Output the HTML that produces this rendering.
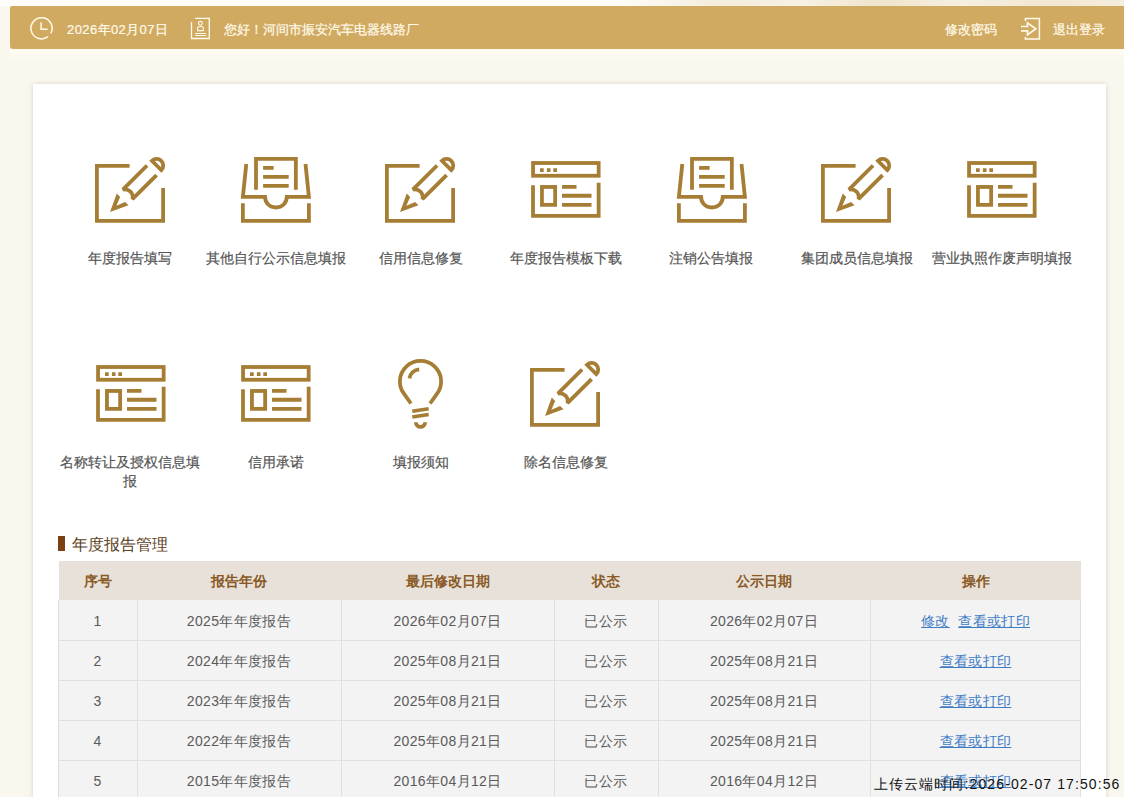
<!DOCTYPE html>
<html><head><meta charset="utf-8">
<style>
*{margin:0;padding:0;box-sizing:border-box}
html,body{width:1124px;height:797px;overflow:hidden}
body{background:#f9f7ee;font-family:"Liberation Sans",sans-serif;position:relative}
.toptex{position:absolute;left:0;top:0;width:1124px;height:6px;background:linear-gradient(90deg,#fdfdfb 0,#fdfcf8 620px,#f4ecdc 720px,#f7f1e4 800px,#efe4cc 880px,#f6efe0 960px,#f1e7d2 1050px,#f5eddd 1124px)}
.bar{position:absolute;left:10px;top:6px;width:1114px;height:43px;background:#d1aa62;border-radius:2px 0 0 3px;color:#fffbea;font-size:13px;-webkit-text-stroke:0.2px #fffbea}
.bar span{position:absolute;top:16px;line-height:16px;white-space:nowrap}
.card{position:absolute;left:33px;top:84px;width:1073px;height:760px;background:#fff;box-shadow:0 0 5px rgba(0,0,0,.14)}
.lbl{position:absolute;width:146px;text-align:center;font-size:14px;line-height:19px;color:#555;-webkit-text-stroke:0.2px #555}
.ttl{position:absolute;left:58px;top:536px;width:7px;height:15px;background:#7b4010}
.ttlt{position:absolute;left:72px;top:535px;font-size:16px;line-height:20px;color:#5b3d21}
.th{position:absolute;top:561px;height:39px;left:59px;width:1022px;background:#e8e1d9}
.cell{position:absolute;text-align:center;font-size:14px;line-height:20px;color:#5a5a5a;letter-spacing:0.35px}
.hd{letter-spacing:0}
.hd{font-weight:bold;color:#8a5a26}
.row{position:absolute;left:58px;width:1023px;height:40px;background:#f3f3f3;border-left:1px solid #dedede;border-right:1px solid #dedede;border-bottom:1px solid #e0e0e0}
.hl{position:absolute;left:58px;width:1023px;height:1px;background:#e0e0e0}
.vl{position:absolute;top:600px;width:1px;height:197px;background:#e0e0e0}
a{color:#3f7cc6;text-decoration:underline}
.stamp{position:absolute;left:874px;top:774px;font-size:14px;line-height:20px;color:#111;white-space:nowrap;letter-spacing:1.1px}
</style></head><body>
<div class="toptex"></div>
<div style="position:absolute;left:10px;top:49px;width:1114px;height:12px;background:linear-gradient(#fffdf3,#f9f7ee)"></div>
<div class="bar">
  <span style="left:57px;letter-spacing:0.4px">2026年02月07日</span>
  <span style="left:214px">您好！河间市振安汽车电器线路厂</span>
  <span style="left:935px">修改密码</span>
  <span style="left:1043px">退出登录</span>
</div>
<svg style="position:absolute;left:0;top:0" width="1124" height="60" viewBox="0 0 1124 60" fill="none" stroke="#fffbea" stroke-width="1.5">
  <path d="M48,36.65 A10.6,10.6 0 1 1 50.86,33.28"/>
  <path d="M41.1,22.3 V29.3 H47.6"/>
  <path d="M195.2,18.4 H209.3 V38.5 H191.5 V22" stroke-width="1.3"/>
  <circle cx="200.4" cy="23.3" r="1.9" stroke-width="1.1"/>
  <path d="M197.6,30.6 V28.3 Q197.6,26.5 200.4,26.5 Q203.3,26.5 203.3,28.3 V30.6 Z" stroke-width="1.1"/>
  <path d="M195.2,33.5 H205.9 M195.2,35.5 H205.9" stroke-width="1"/>
  <path d="M1025.4,20.9 V18.5 H1039.4 V39.1 H1025.4 V37.1" stroke-width="1.5"/>
  <path d="M1021,26.5 H1027.5 V22.8 L1035.8,28.8 L1027.5,34.9 V30.9 H1021" stroke-width="1.7"/>
</svg>
<div class="card"></div>
<svg style="position:absolute;left:0;top:0" width="1124" height="520" viewBox="0 0 1124 520" fill="none" stroke="#a67d34" stroke-width="3.8">
  <defs>
    <g id="edit">
      <path d="M41.6,15.9 H8.9 V70.9 H75.1 V38"/>
      <g transform="translate(42.04,42.04) rotate(-45)">
        <path d="M30.8,-6.75 H-3.4 A7.7,7.7 0 0 1 -3.4,6.75 H30.8"/>
        <path d="M37.6,-6.6 A6.6,6.6 0 0 1 37.6,6.6 Z"/>
        <path fill="#a67d34" stroke="none" d="M-28.3,0 L-10.5,-8.3 L-10.5,-3.5 L-19.3,0 L-10.5,3.5 L-10.5,8.3 Z"/>
      </g>
    </g>
    <g id="inbox">
      <path d="M23,39.7 V8.9 H62.85 V39.7"/>
      <path d="M30.1,17.85 H40.66 M30.1,26.9 H55.7 M30.1,35.9 H55.7"/>
      <path d="M13.3,14 L9.9,46.9 H32 C32.2,53 36.5,57.5 42.9,57.5 C49.3,57.5 53.6,53 53.8,46.9 H75.9 L72.5,14"/>
      <path d="M9.9,53.2 V70.9 H75.9 V53.2"/>
    </g>
    <g id="browser">
      <rect x="9.05" y="13" width="65.6" height="12.75"/>
      <path fill="#a67d34" stroke="none" d="M16,18.3 h3.7 v3.6 h-3.7z M22.9,18.3 h3.6 v3.6 h-3.6z M29.3,18.3 h3.7 v3.6 h-3.7z"/>
      <path d="M9,35.2 V65.85 H74.65 V32.8"/>
      <rect x="17.95" y="36.95" width="13.2" height="17.9"/>
      <path d="M38,36.9 H52.5 M38,45.75 H67.5 M38,54.95 H67.5"/>
    </g>
    <g id="bulb">
      <path d="M31.9,53.5 L25.3,44.2 A20.6,20.6 0 1 1 57.7,44.2 L51.1,53.5"/>
      <path d="M30.4,28.4 A11,11 0 0 1 40.2,19.4"/>
      <path d="M33.3,61.3 L49.7,58.8 M33.3,67.1 L49.7,64.6" stroke-width="3.5"/>
      <path d="M36.9,72.3 A4.6,4.6 0 0 0 46.1,72.3"/>
    </g>
  </defs>
  <use href="#edit" x="88" y="150"/>
  <use href="#inbox" x="233" y="150"/>
  <use href="#edit" x="378" y="150"/>
  <use href="#browser" x="524" y="150"/>
  <use href="#inbox" x="669" y="150"/>
  <use href="#edit" x="814" y="150"/>
  <use href="#browser" x="960" y="150"/>
  <use href="#browser" x="89" y="354"/>
  <use href="#browser" x="234" y="354"/>
  <use href="#bulb" x="379" y="350"/>
  <use href="#edit" x="523" y="354"/>
</svg>
<div class="lbl" style="left:57px;top:249px">年度报告填写</div>
<div class="lbl" style="left:203px;top:249px">其他自行公示信息填报</div>
<div class="lbl" style="left:348px;top:249px">信用信息修复</div>
<div class="lbl" style="left:493px;top:249px">年度报告模板下载</div>
<div class="lbl" style="left:638px;top:249px">注销公告填报</div>
<div class="lbl" style="left:784px;top:249px">集团成员信息填报</div>
<div class="lbl" style="left:929px;top:249px">营业执照作废声明填报</div>
<div class="lbl" style="left:57px;top:453px">名称转让及授权信息填报</div>
<div class="lbl" style="left:203px;top:453px">信用承诺</div>
<div class="lbl" style="left:348px;top:453px">填报须知</div>
<div class="lbl" style="left:493px;top:453px">除名信息修复</div>

<div class="ttl"></div>
<div class="ttlt">年度报告管理</div>
<div class="th"></div>
<div class="cell hd" style="left:58px;width:79px;top:571px">序号</div>
<div class="cell hd" style="left:137px;width:204px;top:571px">报告年份</div>
<div class="cell hd" style="left:341px;width:213px;top:571px">最后修改日期</div>
<div class="cell hd" style="left:554px;width:104px;top:571px">状态</div>
<div class="cell hd" style="left:658px;width:212px;top:571px">公示日期</div>
<div class="cell hd" style="left:870px;width:211px;top:571px">操作</div>

<div class="tb" style="position:absolute;left:58px;top:600px;width:1023px;height:200px;background:#f3f3f3;border-left:1px solid #dedede;border-right:1px solid #dedede"></div>
<div class="hl" style="top:640px"></div>
<div class="hl" style="top:680px"></div>
<div class="hl" style="top:720px"></div>
<div class="hl" style="top:760px"></div>
<div class="vl" style="left:137px"></div>
<div class="vl" style="left:341px"></div>
<div class="vl" style="left:554px"></div>
<div class="vl" style="left:658px"></div>
<div class="vl" style="left:870px"></div>

<div id="rows"></div>
<div class="cell" style="left:58px;width:79px;top:611px">1</div>
<div class="cell" style="left:137px;width:204px;top:611px">2025年年度报告</div>
<div class="cell" style="left:341px;width:213px;top:611px">2026年02月07日</div>
<div class="cell" style="left:554px;width:104px;top:611px">已公示</div>
<div class="cell" style="left:658px;width:212px;top:611px">2026年02月07日</div>
<div class="cell" style="left:870px;width:211px;top:611px"><a>修改</a>&nbsp; <a>查看或打印</a></div>

<div class="cell" style="left:58px;width:79px;top:651px">2</div>
<div class="cell" style="left:137px;width:204px;top:651px">2024年年度报告</div>
<div class="cell" style="left:341px;width:213px;top:651px">2025年08月21日</div>
<div class="cell" style="left:554px;width:104px;top:651px">已公示</div>
<div class="cell" style="left:658px;width:212px;top:651px">2025年08月21日</div>
<div class="cell" style="left:870px;width:211px;top:651px"><a>查看或打印</a></div>

<div class="cell" style="left:58px;width:79px;top:691px">3</div>
<div class="cell" style="left:137px;width:204px;top:691px">2023年年度报告</div>
<div class="cell" style="left:341px;width:213px;top:691px">2025年08月21日</div>
<div class="cell" style="left:554px;width:104px;top:691px">已公示</div>
<div class="cell" style="left:658px;width:212px;top:691px">2025年08月21日</div>
<div class="cell" style="left:870px;width:211px;top:691px"><a>查看或打印</a></div>

<div class="cell" style="left:58px;width:79px;top:731px">4</div>
<div class="cell" style="left:137px;width:204px;top:731px">2022年年度报告</div>
<div class="cell" style="left:341px;width:213px;top:731px">2025年08月21日</div>
<div class="cell" style="left:554px;width:104px;top:731px">已公示</div>
<div class="cell" style="left:658px;width:212px;top:731px">2025年08月21日</div>
<div class="cell" style="left:870px;width:211px;top:731px"><a>查看或打印</a></div>

<div class="cell" style="left:58px;width:79px;top:771px">5</div>
<div class="cell" style="left:137px;width:204px;top:771px">2015年年度报告</div>
<div class="cell" style="left:341px;width:213px;top:771px">2016年04月12日</div>
<div class="cell" style="left:554px;width:104px;top:771px">已公示</div>
<div class="cell" style="left:658px;width:212px;top:771px">2016年04月12日</div>
<div class="cell" style="left:870px;width:211px;top:771px"><a>查看或打印</a></div>

<div class="stamp">上传云端时间:2026-02-07 17:50:56</div>
</body></html>
